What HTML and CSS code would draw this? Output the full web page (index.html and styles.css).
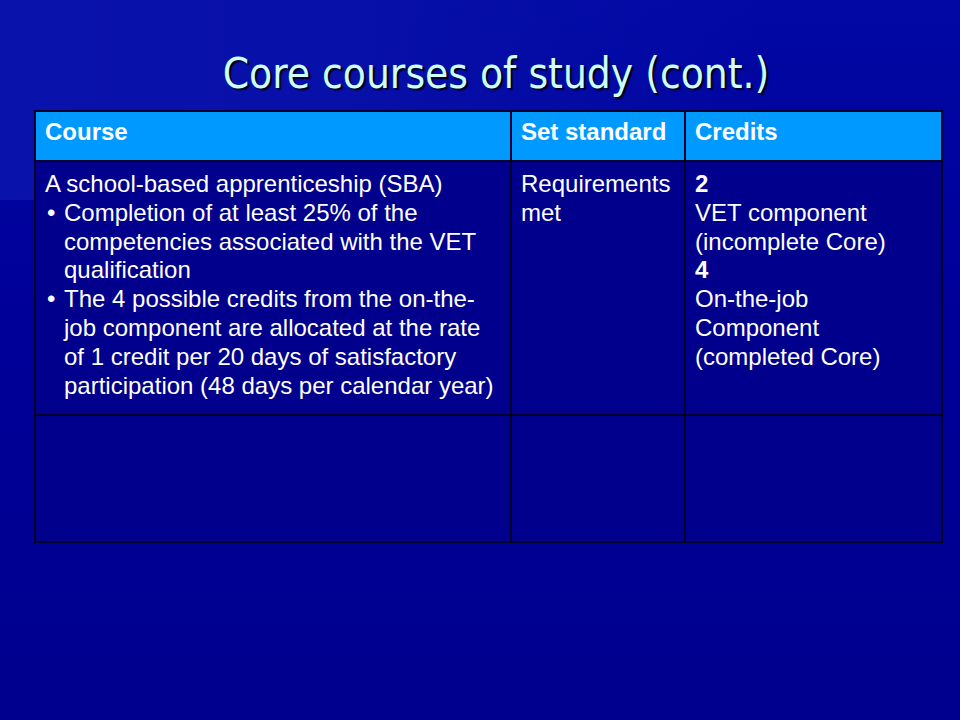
FILE: index.html
```html
<!DOCTYPE html>
<html lang="en">
<head>
<meta charset="utf-8">
<title>Core courses of study (cont.)</title>
<link rel="stylesheet" href="styles.css">
</head>
<body>
<div class="slide">
  <div class="glow"></div>
  <h1 class="title">Core courses of study (cont.)</h1>
  <table class="grid">
    <colgroup>
      <col class="c1">
      <col class="c2">
      <col class="c3">
    </colgroup>
    <thead>
      <tr class="head">
        <th>Course</th>
        <th>Set standard</th>
        <th>Credits</th>
      </tr>
    </thead>
    <tbody>
      <tr class="main">
        <td>
          <p>A school-based apprenticeship (SBA)</p>
          <ul class="bullets">
            <li>Completion of at least 25% of the competencies associated with the VET qualification</li>
            <li>The 4 possible credits from the on-the-job component are allocated at the rate of 1 credit per 20 days of satisfactory participation (48 days per calendar year)</li>
          </ul>
        </td>
        <td><p>Requirements met</p></td>
        <td>
          <p class="num">2</p>
          <p>VET component (incomplete Core)</p>
          <p class="num">4</p>
          <p>On-the-job Component (completed Core)</p>
        </td>
      </tr>
      <tr class="empty">
        <td></td>
        <td></td>
        <td></td>
      </tr>
    </tbody>
  </table>
</div>
</body>
</html>
```

FILE: styles.css
```css
html, body {
  margin: 0;
  padding: 0;
}

body {
  width: 960px;
  height: 720px;
  overflow: hidden;
  background: #000090;
}

.slide {
  position: relative;
  width: 960px;
  height: 720px;
  padding-top: 46px;
  box-sizing: border-box;
  background: linear-gradient(180deg, #0208a4 0%, #00009a 40%, #00008e 100%);
  font-family: "Liberation Sans", Arial, sans-serif;
  color: #ffffff;
}

.glow {
  position: absolute;
  left: 0;
  top: 0;
  width: 960px;
  height: 200px;
  background: linear-gradient(90deg, #0a12ac 0%, #0710a8 35%, rgba(0, 0, 140, 0) 80%);
  pointer-events: none;
}

.title {
  position: relative;
  margin: 0 0 8px 0;
  padding-left: 32px;
  text-align: center;
  font-family: "DejaVu Sans Condensed", "DejaVu Sans", sans-serif;
  font-stretch: condensed;
  font-weight: normal;
  font-size: 42px;
  line-height: 56px;
  color: #ccffff;
  text-shadow: 2px 2px 1px #000022;
}

.grid {
  position: relative;
  margin-left: 34px;
  width: 907px;
  border-collapse: collapse;
  table-layout: fixed;
  font-size: 24px;
  line-height: 28.8px;
}

.c1 { width: 476px; }
.c2 { width: 174px; }
.c3 { width: 257px; }

.grid th,
.grid td {
  border: 2px solid #00002a;
  padding: 8px 10px 4px 9px;
  vertical-align: top;
  text-align: left;
}

.head th {
  height: 38px;
  background: #0099ff;
  font-weight: bold;
  padding-top: 6px;
}

.main td {
  height: 240px;
  background: #00008c;
}

.empty td {
  height: 113px;
  background: #00008c;
}

.grid p {
  margin: 0;
}

.num {
  font-weight: bold;
}

.bullets {
  margin: 0;
  padding: 0;
  list-style: none;
}

.bullets li {
  position: relative;
  padding-left: 19px;
}

.bullets li::before {
  content: "\2022";
  position: absolute;
  left: 2px;
  top: 0;
}
```
